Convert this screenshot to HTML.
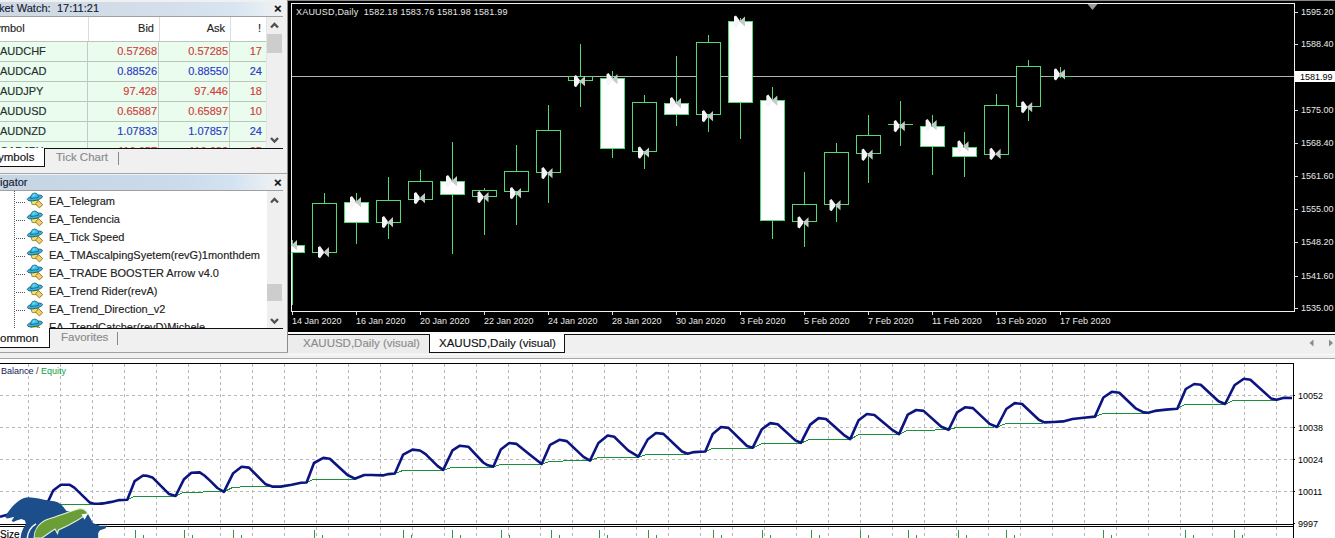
<!DOCTYPE html><html><head><meta charset="utf-8"><style>

*{margin:0;padding:0;box-sizing:border-box}
html,body{width:1335px;height:538px;overflow:hidden;background:#f0f0f0;font-family:"Liberation Sans", sans-serif;}
.a{position:absolute}
.t{position:absolute;white-space:nowrap;line-height:1;-webkit-text-stroke:0.15px currentColor}

</style></head><body>
<div class="a" style="left:0;top:0;width:283px;height:2px;background:#eef0f2"></div>
<div class="a" style="left:0;top:2px;width:283px;height:14px;background:linear-gradient(to right,#cfd8e2,#d4dfeb 60%,#d8e4f0 82%,#e8eef3 94%,#f0f0f0)"></div>
<div class="t" style="left:-1px;top:3px;font-size:11px;color:#142232">ket Watch:</div>
<div class="t" style="left:57px;top:3px;font-size:11px;color:#142232">17:11:21</div>
<div class="a" style="left:0;top:16px;width:283px;height:1px;background:#a0a0a0"></div>
<div class="a" style="left:0;top:17px;width:267px;height:24px;background:#fff"></div>
<div class="a" style="left:0;top:41px;width:267px;height:107px;background:#eafcee"></div>
<div class="a" style="left:0;top:0;width:267px;height:148px;overflow:hidden">
<div class="t" style="left:-12px;top:23px;font-size:11px;color:#222">Symbol</div>
<div class="t" style="left:88px;width:66px;text-align:right;top:23px;font-size:11px;color:#222">Bid</div>
<div class="t" style="left:159px;width:66px;text-align:right;top:23px;font-size:11px;color:#222">Ask</div>
<div class="t" style="left:230px;width:31px;text-align:right;top:23px;font-size:11px;color:#222">!</div>
<div class="a" style="left:0;top:41px;width:266px;height:1px;background:#bcc4bc"></div>
<div class="t" style="left:0;top:46px;font-size:11px;color:#1e2e2e">AUDCHF</div>
<div class="t" style="left:88px;width:69px;text-align:right;top:46px;font-size:11px;color:#d23c3c">0.57268</div>
<div class="t" style="left:159px;width:69px;text-align:right;top:46px;font-size:11px;color:#d23c3c">0.57285</div>
<div class="t" style="left:230px;width:32px;text-align:right;top:46px;font-size:11px;color:#d23c3c">17</div>
<div class="a" style="left:0;top:61px;width:266px;height:1px;background:#bcc4bc"></div>
<div class="t" style="left:0;top:66px;font-size:11px;color:#1e2e2e">AUDCAD</div>
<div class="t" style="left:88px;width:69px;text-align:right;top:66px;font-size:11px;color:#2a3ac8">0.88526</div>
<div class="t" style="left:159px;width:69px;text-align:right;top:66px;font-size:11px;color:#2a3ac8">0.88550</div>
<div class="t" style="left:230px;width:32px;text-align:right;top:66px;font-size:11px;color:#2a3ac8">24</div>
<div class="a" style="left:0;top:81px;width:266px;height:1px;background:#bcc4bc"></div>
<div class="t" style="left:0;top:86px;font-size:11px;color:#1e2e2e">AUDJPY</div>
<div class="t" style="left:88px;width:69px;text-align:right;top:86px;font-size:11px;color:#d23c3c">97.428</div>
<div class="t" style="left:159px;width:69px;text-align:right;top:86px;font-size:11px;color:#d23c3c">97.446</div>
<div class="t" style="left:230px;width:32px;text-align:right;top:86px;font-size:11px;color:#d23c3c">18</div>
<div class="a" style="left:0;top:101px;width:266px;height:1px;background:#bcc4bc"></div>
<div class="t" style="left:0;top:106px;font-size:11px;color:#1e2e2e">AUDUSD</div>
<div class="t" style="left:88px;width:69px;text-align:right;top:106px;font-size:11px;color:#d23c3c">0.65887</div>
<div class="t" style="left:159px;width:69px;text-align:right;top:106px;font-size:11px;color:#d23c3c">0.65897</div>
<div class="t" style="left:230px;width:32px;text-align:right;top:106px;font-size:11px;color:#d23c3c">10</div>
<div class="a" style="left:0;top:121px;width:266px;height:1px;background:#bcc4bc"></div>
<div class="t" style="left:0;top:126px;font-size:11px;color:#1e2e2e">AUDNZD</div>
<div class="t" style="left:88px;width:69px;text-align:right;top:126px;font-size:11px;color:#2a3ac8">1.07833</div>
<div class="t" style="left:159px;width:69px;text-align:right;top:126px;font-size:11px;color:#2a3ac8">1.07857</div>
<div class="t" style="left:230px;width:32px;text-align:right;top:126px;font-size:11px;color:#2a3ac8">24</div>
<div class="a" style="left:0;top:141px;width:266px;height:1px;background:#bcc4bc"></div>
<div class="t" style="left:0;top:146px;font-size:11px;color:#1e2e2e">CADJPY</div>
<div class="t" style="left:88px;width:69px;text-align:right;top:146px;font-size:11px;color:#d23c3c">116.657</div>
<div class="t" style="left:159px;width:69px;text-align:right;top:146px;font-size:11px;color:#d23c3c">116.682</div>
<div class="t" style="left:230px;width:32px;text-align:right;top:146px;font-size:11px;color:#d23c3c">25</div>
</div>
<div class="a" style="left:88px;top:17px;width:1px;height:24px;background:#dcdcdc"></div>
<div class="a" style="left:87px;top:41px;width:1px;height:107px;background:#c4cac4"></div>
<div class="a" style="left:159px;top:17px;width:1px;height:24px;background:#dcdcdc"></div>
<div class="a" style="left:158px;top:41px;width:1px;height:107px;background:#c4cac4"></div>
<div class="a" style="left:230px;top:17px;width:1px;height:24px;background:#dcdcdc"></div>
<div class="a" style="left:229px;top:41px;width:1px;height:107px;background:#c4cac4"></div>
<div class="a" style="left:267px;top:17px;width:15px;height:131px;background:#efefef"></div>
<div class="a" style="left:267px;top:34px;width:15px;height:19px;background:#cdcdcd"></div>
<div class="a" style="left:0;top:148px;width:283px;height:1px;background:#111"></div>
<div class="a" style="left:0;top:148px;width:45px;height:19px;background:#fff;border:1px solid #111;border-top:none;border-left:none"></div>
<div class="t" style="left:-2px;top:152px;font-size:11.5px;color:#111">ymbols</div>
<div class="t" style="left:56px;top:152px;font-size:11.5px;color:#8a8a8a">Tick Chart</div>
<div class="a" style="left:118px;top:152px;width:1px;height:13px;background:#888"></div>
<div class="a" style="left:0;top:173px;width:283px;height:1px;background:#a8a8a8"></div>
<div class="a" style="left:0;top:175px;width:283px;height:15px;background:linear-gradient(to right,#c6d5e4,#cbdaea 60%,#d3e2f1 82%,#e8eef3 94%,#f0f0f0)"></div>
<div class="t" style="left:0px;top:177px;font-size:11px;color:#142232">igator</div>
<div class="a" style="left:0;top:190px;width:283px;height:1px;background:#a0a0a0"></div>
<div class="a" style="left:0;top:191px;width:267px;height:138px;background:#fff"></div>
<div class="a" style="left:0;top:191px;width:267px;height:138px;overflow:hidden">
<div class="t" style="left:49px;top:5px;font-size:11px;color:#222">EA_Telegram</div>
<svg class="a" style="left:24px;top:0px" width="22" height="18" viewBox="0 0 22 18"><path d="M6.8,9.3 L14.6,9.3 L13.2,13.6 L8.2,13.6 Z" fill="#f0e070" stroke="#8a7628" stroke-width="0.8"/><path d="M14.7,9.7 L18.7,13.7 L15.4,16.9 L11.4,12.9 Z" fill="#f0d262" stroke="#946a28" stroke-width="0.9"/><ellipse cx="10.9" cy="7" rx="7.7" ry="2.5" transform="rotate(-12 10.9 7)" fill="#38b4de" stroke="#17607a" stroke-width="0.9"/><path d="M6.6,7.6 Q6.8,2.2 10.6,2.1 Q14.2,2.1 14.6,6.4 Z" fill="#3cc2ee" stroke="#17607a" stroke-width="0.8"/><path d="M8.5,5.5 Q9,3.2 11,3.1 L10,5.6 Z" fill="#8ee0fa"/></svg>
<div class="t" style="left:49px;top:23px;font-size:11px;color:#222">EA_Tendencia</div>
<svg class="a" style="left:24px;top:18px" width="22" height="18" viewBox="0 0 22 18"><path d="M6.8,9.3 L14.6,9.3 L13.2,13.6 L8.2,13.6 Z" fill="#f0e070" stroke="#8a7628" stroke-width="0.8"/><path d="M14.7,9.7 L18.7,13.7 L15.4,16.9 L11.4,12.9 Z" fill="#f0d262" stroke="#946a28" stroke-width="0.9"/><ellipse cx="10.9" cy="7" rx="7.7" ry="2.5" transform="rotate(-12 10.9 7)" fill="#38b4de" stroke="#17607a" stroke-width="0.9"/><path d="M6.6,7.6 Q6.8,2.2 10.6,2.1 Q14.2,2.1 14.6,6.4 Z" fill="#3cc2ee" stroke="#17607a" stroke-width="0.8"/><path d="M8.5,5.5 Q9,3.2 11,3.1 L10,5.6 Z" fill="#8ee0fa"/></svg>
<div class="t" style="left:49px;top:41px;font-size:11px;color:#222">EA_Tick Speed</div>
<svg class="a" style="left:24px;top:36px" width="22" height="18" viewBox="0 0 22 18"><path d="M6.8,9.3 L14.6,9.3 L13.2,13.6 L8.2,13.6 Z" fill="#f0e070" stroke="#8a7628" stroke-width="0.8"/><path d="M14.7,9.7 L18.7,13.7 L15.4,16.9 L11.4,12.9 Z" fill="#f0d262" stroke="#946a28" stroke-width="0.9"/><ellipse cx="10.9" cy="7" rx="7.7" ry="2.5" transform="rotate(-12 10.9 7)" fill="#38b4de" stroke="#17607a" stroke-width="0.9"/><path d="M6.6,7.6 Q6.8,2.2 10.6,2.1 Q14.2,2.1 14.6,6.4 Z" fill="#3cc2ee" stroke="#17607a" stroke-width="0.8"/><path d="M8.5,5.5 Q9,3.2 11,3.1 L10,5.6 Z" fill="#8ee0fa"/></svg>
<div class="t" style="left:49px;top:59px;font-size:11px;color:#222">EA_TMAscalpingSyetem(revG)1monthdem</div>
<svg class="a" style="left:24px;top:54px" width="22" height="18" viewBox="0 0 22 18"><path d="M6.8,9.3 L14.6,9.3 L13.2,13.6 L8.2,13.6 Z" fill="#f0e070" stroke="#8a7628" stroke-width="0.8"/><path d="M14.7,9.7 L18.7,13.7 L15.4,16.9 L11.4,12.9 Z" fill="#f0d262" stroke="#946a28" stroke-width="0.9"/><ellipse cx="10.9" cy="7" rx="7.7" ry="2.5" transform="rotate(-12 10.9 7)" fill="#38b4de" stroke="#17607a" stroke-width="0.9"/><path d="M6.6,7.6 Q6.8,2.2 10.6,2.1 Q14.2,2.1 14.6,6.4 Z" fill="#3cc2ee" stroke="#17607a" stroke-width="0.8"/><path d="M8.5,5.5 Q9,3.2 11,3.1 L10,5.6 Z" fill="#8ee0fa"/></svg>
<div class="t" style="left:49px;top:77px;font-size:11px;color:#222">EA_TRADE BOOSTER Arrow v4.0</div>
<svg class="a" style="left:24px;top:72px" width="22" height="18" viewBox="0 0 22 18"><path d="M6.8,9.3 L14.6,9.3 L13.2,13.6 L8.2,13.6 Z" fill="#f0e070" stroke="#8a7628" stroke-width="0.8"/><path d="M14.7,9.7 L18.7,13.7 L15.4,16.9 L11.4,12.9 Z" fill="#f0d262" stroke="#946a28" stroke-width="0.9"/><ellipse cx="10.9" cy="7" rx="7.7" ry="2.5" transform="rotate(-12 10.9 7)" fill="#38b4de" stroke="#17607a" stroke-width="0.9"/><path d="M6.6,7.6 Q6.8,2.2 10.6,2.1 Q14.2,2.1 14.6,6.4 Z" fill="#3cc2ee" stroke="#17607a" stroke-width="0.8"/><path d="M8.5,5.5 Q9,3.2 11,3.1 L10,5.6 Z" fill="#8ee0fa"/></svg>
<div class="t" style="left:49px;top:95px;font-size:11px;color:#222">EA_Trend Rider(revA)</div>
<svg class="a" style="left:24px;top:90px" width="22" height="18" viewBox="0 0 22 18"><path d="M6.8,9.3 L14.6,9.3 L13.2,13.6 L8.2,13.6 Z" fill="#f0e070" stroke="#8a7628" stroke-width="0.8"/><path d="M14.7,9.7 L18.7,13.7 L15.4,16.9 L11.4,12.9 Z" fill="#f0d262" stroke="#946a28" stroke-width="0.9"/><ellipse cx="10.9" cy="7" rx="7.7" ry="2.5" transform="rotate(-12 10.9 7)" fill="#38b4de" stroke="#17607a" stroke-width="0.9"/><path d="M6.6,7.6 Q6.8,2.2 10.6,2.1 Q14.2,2.1 14.6,6.4 Z" fill="#3cc2ee" stroke="#17607a" stroke-width="0.8"/><path d="M8.5,5.5 Q9,3.2 11,3.1 L10,5.6 Z" fill="#8ee0fa"/></svg>
<div class="t" style="left:49px;top:113px;font-size:11px;color:#222">EA_Trend_Direction_v2</div>
<svg class="a" style="left:24px;top:108px" width="22" height="18" viewBox="0 0 22 18"><path d="M6.8,9.3 L14.6,9.3 L13.2,13.6 L8.2,13.6 Z" fill="#f0e070" stroke="#8a7628" stroke-width="0.8"/><path d="M14.7,9.7 L18.7,13.7 L15.4,16.9 L11.4,12.9 Z" fill="#f0d262" stroke="#946a28" stroke-width="0.9"/><ellipse cx="10.9" cy="7" rx="7.7" ry="2.5" transform="rotate(-12 10.9 7)" fill="#38b4de" stroke="#17607a" stroke-width="0.9"/><path d="M6.6,7.6 Q6.8,2.2 10.6,2.1 Q14.2,2.1 14.6,6.4 Z" fill="#3cc2ee" stroke="#17607a" stroke-width="0.8"/><path d="M8.5,5.5 Q9,3.2 11,3.1 L10,5.6 Z" fill="#8ee0fa"/></svg>
<div class="t" style="left:49px;top:131px;font-size:11px;color:#222">EA_TrendCatcher(revD)Michele</div>
<svg class="a" style="left:24px;top:126px" width="22" height="18" viewBox="0 0 22 18"><path d="M6.8,9.3 L14.6,9.3 L13.2,13.6 L8.2,13.6 Z" fill="#f0e070" stroke="#8a7628" stroke-width="0.8"/><path d="M14.7,9.7 L18.7,13.7 L15.4,16.9 L11.4,12.9 Z" fill="#f0d262" stroke="#946a28" stroke-width="0.9"/><ellipse cx="10.9" cy="7" rx="7.7" ry="2.5" transform="rotate(-12 10.9 7)" fill="#38b4de" stroke="#17607a" stroke-width="0.9"/><path d="M6.6,7.6 Q6.8,2.2 10.6,2.1 Q14.2,2.1 14.6,6.4 Z" fill="#3cc2ee" stroke="#17607a" stroke-width="0.8"/><path d="M8.5,5.5 Q9,3.2 11,3.1 L10,5.6 Z" fill="#8ee0fa"/></svg>
</div>
<div class="a" style="left:14px;top:191px;width:1px;height:138px;background:repeating-linear-gradient(to bottom,#555 0 1px,transparent 1px 2px)"></div>
<div class="a" style="left:15px;top:202px;width:10px;height:1px;background:repeating-linear-gradient(to right,transparent 0 1px,#555 1px 2px)"></div>
<div class="a" style="left:15px;top:220px;width:10px;height:1px;background:repeating-linear-gradient(to right,transparent 0 1px,#555 1px 2px)"></div>
<div class="a" style="left:15px;top:238px;width:10px;height:1px;background:repeating-linear-gradient(to right,transparent 0 1px,#555 1px 2px)"></div>
<div class="a" style="left:15px;top:256px;width:10px;height:1px;background:repeating-linear-gradient(to right,transparent 0 1px,#555 1px 2px)"></div>
<div class="a" style="left:15px;top:274px;width:10px;height:1px;background:repeating-linear-gradient(to right,transparent 0 1px,#555 1px 2px)"></div>
<div class="a" style="left:15px;top:292px;width:10px;height:1px;background:repeating-linear-gradient(to right,transparent 0 1px,#555 1px 2px)"></div>
<div class="a" style="left:15px;top:310px;width:10px;height:1px;background:repeating-linear-gradient(to right,transparent 0 1px,#555 1px 2px)"></div>
<div class="a" style="left:15px;top:328px;width:10px;height:1px;background:repeating-linear-gradient(to right,transparent 0 1px,#555 1px 2px)"></div>
<div class="a" style="left:267px;top:191px;width:15px;height:138px;background:#efefef"></div>
<div class="a" style="left:267px;top:284px;width:15px;height:17px;background:#cdcdcd"></div>
<div class="a" style="left:0;top:328px;width:283px;height:1px;background:#111"></div>
<div class="a" style="left:0;top:328px;width:50px;height:20px;background:#fff;border:1px solid #111;border-top:none;border-left:none"></div>
<div class="t" style="left:0px;top:333px;font-size:11.5px;color:#111">ommon</div>
<div class="t" style="left:61px;top:332px;font-size:11.5px;color:#8a8a8a">Favorites</div>
<div class="a" style="left:117px;top:332px;width:1px;height:13px;background:#888"></div>
<svg class="a" style="left:270px;top:22px" width="9" height="7"><path d="M1,5.5 L4.5,2 L8,5.5" fill="none" stroke="#505050" stroke-width="2.3"/></svg>
<svg class="a" style="left:270px;top:137px" width="9" height="7"><path d="M1,1 L4.5,4.5 L8,1" fill="none" stroke="#505050" stroke-width="2.3"/></svg>
<div class="a" style="left:266px;top:17px;width:1px;height:131px;background:#e2e6e2"></div>
<svg class="a" style="left:270px;top:197px" width="9" height="7"><path d="M1,5.5 L4.5,2 L8,5.5" fill="none" stroke="#505050" stroke-width="2.3"/></svg>
<svg class="a" style="left:270px;top:318px" width="9" height="7"><path d="M1,1 L4.5,4.5 L8,1" fill="none" stroke="#505050" stroke-width="2.3"/></svg>
<div class="t" style="left:274px;top:2px;font-size:13px;font-weight:bold;color:#111">×</div>
<div class="t" style="left:274px;top:176px;font-size:13px;font-weight:bold;color:#111">×</div>
<div class="a" style="left:287px;top:0;width:1px;height:353px;background:#8c8c8c"></div>
<div class="a" style="left:283px;top:173px;width:4px;height:1px;background:#a8a8a8"></div>
<div class="a" style="left:0;top:352px;width:288px;height:1px;background:#a0a0a0"></div>
<div class="a" style="left:288px;top:0px;width:1047px;height:332px;background:#000"></div>
<div class="a" style="left:288px;top:0px;width:1047px;height:1px;background:#8a8a8a"></div>
<div class="a" style="left:291px;top:3px;width:1004px;height:309px;border:1px solid #f0f0f0"></div>
<div class="t" style="left:296px;top:8px;font-size:9px;-webkit-text-stroke:0;letter-spacing:0.2px;color:#e8e8e8">XAUUSD,Daily&nbsp; 1582.18 1583.76 1581.98 1581.99</div>
<svg width="1335" height="538" style="position:absolute;left:0;top:0">
<defs><clipPath id="cc"><rect x="291.5" y="4" width="1002.5" height="307"/></clipPath></defs>
<line x1="292" y1="76.5" x2="1294" y2="76.5" stroke="#b4b4b4" stroke-width="1"/>
<g clip-path="url(#cc)" shape-rendering="crispEdges">
<rect x="292" y="240" width="1" height="65" fill="#52da76"/>
<rect x="280.5" y="245.5" width="24" height="7" fill="#ffffff" stroke="#52da76" stroke-width="1"/>
<rect x="324" y="193" width="1" height="60" fill="#52da76"/>
<rect x="312.5" y="203.5" width="24" height="49" fill="#000000" stroke="#52da76" stroke-width="1"/>
<rect x="356" y="193" width="1" height="51" fill="#52da76"/>
<rect x="344.5" y="202.5" width="24" height="20" fill="#ffffff" stroke="#52da76" stroke-width="1"/>
<rect x="388" y="177" width="1" height="62" fill="#52da76"/>
<rect x="376.5" y="200.5" width="24" height="22" fill="#000000" stroke="#52da76" stroke-width="1"/>
<rect x="420" y="170" width="1" height="30" fill="#52da76"/>
<rect x="408.5" y="181.5" width="24" height="18" fill="#000000" stroke="#52da76" stroke-width="1"/>
<rect x="452" y="142" width="1" height="112" fill="#52da76"/>
<rect x="440.5" y="181.5" width="24" height="13" fill="#ffffff" stroke="#52da76" stroke-width="1"/>
<rect x="484" y="188" width="1" height="47" fill="#52da76"/>
<rect x="472.5" y="190.5" width="24" height="6" fill="#000000" stroke="#52da76" stroke-width="1"/>
<rect x="516" y="145" width="1" height="80" fill="#52da76"/>
<rect x="504.5" y="171.5" width="24" height="20" fill="#000000" stroke="#52da76" stroke-width="1"/>
<rect x="548" y="105" width="1" height="98" fill="#52da76"/>
<rect x="536.5" y="130.5" width="24" height="42" fill="#000000" stroke="#52da76" stroke-width="1"/>
<rect x="580" y="44" width="1" height="63" fill="#52da76"/>
<rect x="568.5" y="76.5" width="24" height="4" fill="#000000" stroke="#52da76" stroke-width="1"/>
<rect x="612" y="71" width="1" height="87" fill="#52da76"/>
<rect x="600.5" y="78.5" width="24" height="70" fill="#ffffff" stroke="#52da76" stroke-width="1"/>
<rect x="644" y="95" width="1" height="74" fill="#52da76"/>
<rect x="632.5" y="102.5" width="24" height="49" fill="#000000" stroke="#52da76" stroke-width="1"/>
<rect x="676" y="56" width="1" height="70" fill="#52da76"/>
<rect x="664.5" y="103.5" width="24" height="11" fill="#ffffff" stroke="#52da76" stroke-width="1"/>
<rect x="708" y="35" width="1" height="97" fill="#52da76"/>
<rect x="696.5" y="42.5" width="24" height="72" fill="#000000" stroke="#52da76" stroke-width="1"/>
<rect x="740" y="18" width="1" height="121" fill="#52da76"/>
<rect x="728.5" y="21.5" width="24" height="81" fill="#ffffff" stroke="#52da76" stroke-width="1"/>
<rect x="772" y="87" width="1" height="152" fill="#52da76"/>
<rect x="760.5" y="100.5" width="24" height="120" fill="#ffffff" stroke="#52da76" stroke-width="1"/>
<rect x="804" y="172" width="1" height="75" fill="#52da76"/>
<rect x="792.5" y="204.5" width="24" height="17" fill="#000000" stroke="#52da76" stroke-width="1"/>
<rect x="836" y="143" width="1" height="79" fill="#52da76"/>
<rect x="824.5" y="152.5" width="24" height="52" fill="#000000" stroke="#52da76" stroke-width="1"/>
<rect x="868" y="115" width="1" height="68" fill="#52da76"/>
<rect x="856.5" y="135.5" width="24" height="18" fill="#000000" stroke="#52da76" stroke-width="1"/>
<rect x="900" y="101" width="1" height="45" fill="#52da76"/>
<rect x="888" y="124" width="25" height="1" fill="#52da76"/>
<rect x="932" y="115" width="1" height="60" fill="#52da76"/>
<rect x="920.5" y="126.5" width="24" height="20" fill="#ffffff" stroke="#52da76" stroke-width="1"/>
<rect x="964" y="132" width="1" height="45" fill="#52da76"/>
<rect x="952.5" y="147.5" width="24" height="9" fill="#ffffff" stroke="#52da76" stroke-width="1"/>
<rect x="996" y="94" width="1" height="61" fill="#52da76"/>
<rect x="984.5" y="105.5" width="24" height="49" fill="#000000" stroke="#52da76" stroke-width="1"/>
<rect x="1028" y="60" width="1" height="61" fill="#52da76"/>
<rect x="1016.5" y="66.5" width="24" height="40" fill="#000000" stroke="#52da76" stroke-width="1"/>
<rect x="1060" y="67" width="1" height="11" fill="#52da76"/>
<rect x="1048" y="76" width="25" height="1" fill="#52da76"/>
</g>
<g clip-path="url(#cc)">
<g transform="translate(292,245)"><path d="M-6,-4.8 L-4,-6 L-0.3,-1 L-0.3,1.3 L-4,6.3 L-6,5 Z" fill="#f6f4f6"/><path d="M0.2,-0.6 L5,-5 L5,5.2 L0.2,1 Z" fill="#c6caca"/></g>
<g transform="translate(324,252)"><path d="M-6,-4.8 L-4,-6 L-0.3,-1 L-0.3,1.3 L-4,6.3 L-6,5 Z" fill="#f6f4f6"/><path d="M0.2,-0.6 L5,-5 L5,5.2 L0.2,1 Z" fill="#c6caca"/></g>
<g transform="translate(356,202)"><path d="M-6,-4.8 L-4,-6 L-0.3,-1 L-0.3,1.3 L-4,6.3 L-6,5 Z" fill="#f6f4f6"/><path d="M0.2,-0.6 L5,-5 L5,5.2 L0.2,1 Z" fill="#c6caca"/></g>
<g transform="translate(388,222)"><path d="M-6,-4.8 L-4,-6 L-0.3,-1 L-0.3,1.3 L-4,6.3 L-6,5 Z" fill="#f6f4f6"/><path d="M0.2,-0.6 L5,-5 L5,5.2 L0.2,1 Z" fill="#c6caca"/></g>
<g transform="translate(420,198)"><path d="M-6,-4.8 L-4,-6 L-0.3,-1 L-0.3,1.3 L-4,6.3 L-6,5 Z" fill="#f6f4f6"/><path d="M0.2,-0.6 L5,-5 L5,5.2 L0.2,1 Z" fill="#c6caca"/></g>
<g transform="translate(452,181)"><path d="M-6,-4.8 L-4,-6 L-0.3,-1 L-0.3,1.3 L-4,6.3 L-6,5 Z" fill="#f6f4f6"/><path d="M0.2,-0.6 L5,-5 L5,5.2 L0.2,1 Z" fill="#c6caca"/></g>
<g transform="translate(483.5,197)"><path d="M-6,-4.8 L-4,-6 L-0.3,-1 L-0.3,1.3 L-4,6.3 L-6,5 Z" fill="#f6f4f6"/><path d="M0.2,-0.6 L5,-5 L5,5.2 L0.2,1 Z" fill="#c6caca"/></g>
<g transform="translate(516,193)"><path d="M-6,-4.8 L-4,-6 L-0.3,-1 L-0.3,1.3 L-4,6.3 L-6,5 Z" fill="#f6f4f6"/><path d="M0.2,-0.6 L5,-5 L5,5.2 L0.2,1 Z" fill="#c6caca"/></g>
<g transform="translate(547.5,173)"><path d="M-6,-4.8 L-4,-6 L-0.3,-1 L-0.3,1.3 L-4,6.3 L-6,5 Z" fill="#f6f4f6"/><path d="M0.2,-0.6 L5,-5 L5,5.2 L0.2,1 Z" fill="#c6caca"/></g>
<g transform="translate(580,81)"><path d="M-6,-4.8 L-4,-6 L-0.3,-1 L-0.3,1.3 L-4,6.3 L-6,5 Z" fill="#f6f4f6"/><path d="M0.2,-0.6 L5,-5 L5,5.2 L0.2,1 Z" fill="#c6caca"/></g>
<g transform="translate(612.5,79)"><path d="M-6,-4.8 L-4,-6 L-0.3,-1 L-0.3,1.3 L-4,6.3 L-6,5 Z" fill="#f6f4f6"/><path d="M0.2,-0.6 L5,-5 L5,5.2 L0.2,1 Z" fill="#c6caca"/></g>
<g transform="translate(644,152.4)"><path d="M-6,-4.8 L-4,-6 L-0.3,-1 L-0.3,1.3 L-4,6.3 L-6,5 Z" fill="#f6f4f6"/><path d="M0.2,-0.6 L5,-5 L5,5.2 L0.2,1 Z" fill="#c6caca"/></g>
<g transform="translate(676,103)"><path d="M-6,-4.8 L-4,-6 L-0.3,-1 L-0.3,1.3 L-4,6.3 L-6,5 Z" fill="#f6f4f6"/><path d="M0.2,-0.6 L5,-5 L5,5.2 L0.2,1 Z" fill="#c6caca"/></g>
<g transform="translate(708,116)"><path d="M-6,-4.8 L-4,-6 L-0.3,-1 L-0.3,1.3 L-4,6.3 L-6,5 Z" fill="#f6f4f6"/><path d="M0.2,-0.6 L5,-5 L5,5.2 L0.2,1 Z" fill="#c6caca"/></g>
<g transform="translate(740,21.4)"><path d="M-6,-4.8 L-4,-6 L-0.3,-1 L-0.3,1.3 L-4,6.3 L-6,5 Z" fill="#f6f4f6"/><path d="M0.2,-0.6 L5,-5 L5,5.2 L0.2,1 Z" fill="#c6caca"/></g>
<g transform="translate(772.3,100.6)"><path d="M-6,-4.8 L-4,-6 L-0.3,-1 L-0.3,1.3 L-4,6.3 L-6,5 Z" fill="#f6f4f6"/><path d="M0.2,-0.6 L5,-5 L5,5.2 L0.2,1 Z" fill="#c6caca"/></g>
<g transform="translate(803.5,222.3)"><path d="M-6,-4.8 L-4,-6 L-0.3,-1 L-0.3,1.3 L-4,6.3 L-6,5 Z" fill="#f6f4f6"/><path d="M0.2,-0.6 L5,-5 L5,5.2 L0.2,1 Z" fill="#c6caca"/></g>
<g transform="translate(835.5,205)"><path d="M-6,-4.8 L-4,-6 L-0.3,-1 L-0.3,1.3 L-4,6.3 L-6,5 Z" fill="#f6f4f6"/><path d="M0.2,-0.6 L5,-5 L5,5.2 L0.2,1 Z" fill="#c6caca"/></g>
<g transform="translate(867.6,154.6)"><path d="M-6,-4.8 L-4,-6 L-0.3,-1 L-0.3,1.3 L-4,6.3 L-6,5 Z" fill="#f6f4f6"/><path d="M0.2,-0.6 L5,-5 L5,5.2 L0.2,1 Z" fill="#c6caca"/></g>
<g transform="translate(899.8,126)"><path d="M-6,-4.8 L-4,-6 L-0.3,-1 L-0.3,1.3 L-4,6.3 L-6,5 Z" fill="#f6f4f6"/><path d="M0.2,-0.6 L5,-5 L5,5.2 L0.2,1 Z" fill="#c6caca"/></g>
<g transform="translate(931.6,125)"><path d="M-6,-4.8 L-4,-6 L-0.3,-1 L-0.3,1.3 L-4,6.3 L-6,5 Z" fill="#f6f4f6"/><path d="M0.2,-0.6 L5,-5 L5,5.2 L0.2,1 Z" fill="#c6caca"/></g>
<g transform="translate(963.5,146.3)"><path d="M-6,-4.8 L-4,-6 L-0.3,-1 L-0.3,1.3 L-4,6.3 L-6,5 Z" fill="#f6f4f6"/><path d="M0.2,-0.6 L5,-5 L5,5.2 L0.2,1 Z" fill="#c6caca"/></g>
<g transform="translate(995.6,153.8)"><path d="M-6,-4.8 L-4,-6 L-0.3,-1 L-0.3,1.3 L-4,6.3 L-6,5 Z" fill="#f6f4f6"/><path d="M0.2,-0.6 L5,-5 L5,5.2 L0.2,1 Z" fill="#c6caca"/></g>
<g transform="translate(1027.2,107)"><path d="M-6,-4.8 L-4,-6 L-0.3,-1 L-0.3,1.3 L-4,6.3 L-6,5 Z" fill="#f6f4f6"/><path d="M0.2,-0.6 L5,-5 L5,5.2 L0.2,1 Z" fill="#c6caca"/></g>
<g transform="translate(1060,74.2)"><path d="M-6,-4.8 L-4,-6 L-0.3,-1 L-0.3,1.3 L-4,6.3 L-6,5 Z" fill="#f6f4f6"/><path d="M0.2,-0.6 L5,-5 L5,5.2 L0.2,1 Z" fill="#c6caca"/></g>
</g>
</svg>
<div class="a" style="left:1294px;top:12px;width:4px;height:1px;background:#ddd"></div>
<div class="t" style="left:1301px;top:8px;font-size:9px;-webkit-text-stroke:0;color:#e8e8e8">1595.20</div>
<div class="a" style="left:1294px;top:44px;width:4px;height:1px;background:#ddd"></div>
<div class="t" style="left:1301px;top:40px;font-size:9px;-webkit-text-stroke:0;color:#e8e8e8">1588.40</div>
<div class="a" style="left:1294px;top:110px;width:4px;height:1px;background:#ddd"></div>
<div class="t" style="left:1301px;top:106px;font-size:9px;-webkit-text-stroke:0;color:#e8e8e8">1575.00</div>
<div class="a" style="left:1294px;top:143px;width:4px;height:1px;background:#ddd"></div>
<div class="t" style="left:1301px;top:139px;font-size:9px;-webkit-text-stroke:0;color:#e8e8e8">1568.40</div>
<div class="a" style="left:1294px;top:176px;width:4px;height:1px;background:#ddd"></div>
<div class="t" style="left:1301px;top:172px;font-size:9px;-webkit-text-stroke:0;color:#e8e8e8">1561.60</div>
<div class="a" style="left:1294px;top:209px;width:4px;height:1px;background:#ddd"></div>
<div class="t" style="left:1301px;top:205px;font-size:9px;-webkit-text-stroke:0;color:#e8e8e8">1555.00</div>
<div class="a" style="left:1294px;top:242px;width:4px;height:1px;background:#ddd"></div>
<div class="t" style="left:1301px;top:238px;font-size:9px;-webkit-text-stroke:0;color:#e8e8e8">1548.20</div>
<div class="a" style="left:1294px;top:276px;width:4px;height:1px;background:#ddd"></div>
<div class="t" style="left:1301px;top:272px;font-size:9px;-webkit-text-stroke:0;color:#e8e8e8">1541.60</div>
<div class="a" style="left:1294px;top:308px;width:4px;height:1px;background:#ddd"></div>
<div class="t" style="left:1301px;top:304px;font-size:9px;-webkit-text-stroke:0;color:#e8e8e8">1535.00</div>
<div class="a" style="left:1295px;top:71px;width:40px;height:11px;background:#fff"></div>
<div class="t" style="left:1300px;top:73px;font-size:9px;-webkit-text-stroke:0;color:#000">1581.99</div>
<div class="a" style="left:292px;top:312px;width:1px;height:3px;background:#ddd"></div>
<div class="t" style="left:292px;top:317px;font-size:9px;-webkit-text-stroke:0;color:#e8e8e8">14 Jan 2020</div>
<div class="a" style="left:356px;top:312px;width:1px;height:3px;background:#ddd"></div>
<div class="t" style="left:356px;top:317px;font-size:9px;-webkit-text-stroke:0;color:#e8e8e8">16 Jan 2020</div>
<div class="a" style="left:420px;top:312px;width:1px;height:3px;background:#ddd"></div>
<div class="t" style="left:420px;top:317px;font-size:9px;-webkit-text-stroke:0;color:#e8e8e8">20 Jan 2020</div>
<div class="a" style="left:484px;top:312px;width:1px;height:3px;background:#ddd"></div>
<div class="t" style="left:484px;top:317px;font-size:9px;-webkit-text-stroke:0;color:#e8e8e8">22 Jan 2020</div>
<div class="a" style="left:548px;top:312px;width:1px;height:3px;background:#ddd"></div>
<div class="t" style="left:548px;top:317px;font-size:9px;-webkit-text-stroke:0;color:#e8e8e8">24 Jan 2020</div>
<div class="a" style="left:612px;top:312px;width:1px;height:3px;background:#ddd"></div>
<div class="t" style="left:612px;top:317px;font-size:9px;-webkit-text-stroke:0;color:#e8e8e8">28 Jan 2020</div>
<div class="a" style="left:676px;top:312px;width:1px;height:3px;background:#ddd"></div>
<div class="t" style="left:676px;top:317px;font-size:9px;-webkit-text-stroke:0;color:#e8e8e8">30 Jan 2020</div>
<div class="a" style="left:740px;top:312px;width:1px;height:3px;background:#ddd"></div>
<div class="t" style="left:740px;top:317px;font-size:9px;-webkit-text-stroke:0;color:#e8e8e8">3 Feb 2020</div>
<div class="a" style="left:804px;top:312px;width:1px;height:3px;background:#ddd"></div>
<div class="t" style="left:804px;top:317px;font-size:9px;-webkit-text-stroke:0;color:#e8e8e8">5 Feb 2020</div>
<div class="a" style="left:868px;top:312px;width:1px;height:3px;background:#ddd"></div>
<div class="t" style="left:868px;top:317px;font-size:9px;-webkit-text-stroke:0;color:#e8e8e8">7 Feb 2020</div>
<div class="a" style="left:932px;top:312px;width:1px;height:3px;background:#ddd"></div>
<div class="t" style="left:932px;top:317px;font-size:9px;-webkit-text-stroke:0;color:#e8e8e8">11 Feb 2020</div>
<div class="a" style="left:996px;top:312px;width:1px;height:3px;background:#ddd"></div>
<div class="t" style="left:996px;top:317px;font-size:9px;-webkit-text-stroke:0;color:#e8e8e8">13 Feb 2020</div>
<div class="a" style="left:1060px;top:312px;width:1px;height:3px;background:#ddd"></div>
<div class="t" style="left:1060px;top:317px;font-size:9px;-webkit-text-stroke:0;color:#e8e8e8">17 Feb 2020</div>
<svg class="a" style="left:1087px;top:4px" width="12" height="7"><path d="M0.5,0 L10.5,0 L5.5,6 Z" fill="#9a9a9a"/></svg>
<div class="a" style="left:288px;top:332px;width:1047px;height:2px;background:#fafafa"></div>
<div class="a" style="left:288px;top:334px;width:1047px;height:1px;background:#111"></div>
<div class="a" style="left:288px;top:335px;width:141px;height:18px;background:#ececec"></div>
<div class="t" style="left:303px;top:338px;font-size:11.5px;color:#8c8c8c">XAUUSD,Daily (visual)</div>
<div class="a" style="left:429px;top:334px;width:136px;height:19px;background:#fff;border:1px solid #111;border-top:none"></div>
<div class="t" style="left:439px;top:338px;font-size:11.5px;color:#111">XAUUSD,Daily (visual)</div>
<svg class="a" style="left:1309px;top:339px" width="26" height="9"><path d="M4.5,0.5 L0.5,4 L4.5,7.5Z" fill="#8a8a8a"/><path d="M20,0.5 L24,4 L20,7.5Z" fill="#8a8a8a"/></svg>
<div class="a" style="left:288px;top:354px;width:1047px;height:1px;background:#fafafa"></div>
<div class="a" style="left:0;top:358px;width:1335px;height:1px;background:#a8a8a8"></div>
<div class="a" style="left:0;top:359px;width:1335px;height:179px;background:#fff"></div>
<svg width="1335" height="538" style="position:absolute;left:0;top:0">
<g stroke="#b8b8b8" stroke-width="1" stroke-dasharray="3 3" shape-rendering="crispEdges">
<line x1="0" y1="395.5" x2="1293" y2="395.5"/>
<line x1="0" y1="427.5" x2="1293" y2="427.5"/>
<line x1="0" y1="459.5" x2="1293" y2="459.5"/>
<line x1="0" y1="491.5" x2="1293" y2="491.5"/>
<line x1="28.5" y1="364" x2="28.5" y2="524"/>
<line x1="28.5" y1="527" x2="28.5" y2="538"/>
<line x1="60.5" y1="364" x2="60.5" y2="524"/>
<line x1="60.5" y1="527" x2="60.5" y2="538"/>
<line x1="92.5" y1="364" x2="92.5" y2="524"/>
<line x1="92.5" y1="527" x2="92.5" y2="538"/>
<line x1="124.5" y1="364" x2="124.5" y2="524"/>
<line x1="124.5" y1="527" x2="124.5" y2="538"/>
<line x1="156.5" y1="364" x2="156.5" y2="524"/>
<line x1="156.5" y1="527" x2="156.5" y2="538"/>
<line x1="188.5" y1="364" x2="188.5" y2="524"/>
<line x1="188.5" y1="527" x2="188.5" y2="538"/>
<line x1="220.5" y1="364" x2="220.5" y2="524"/>
<line x1="220.5" y1="527" x2="220.5" y2="538"/>
<line x1="252.5" y1="364" x2="252.5" y2="524"/>
<line x1="252.5" y1="527" x2="252.5" y2="538"/>
<line x1="284.5" y1="364" x2="284.5" y2="524"/>
<line x1="284.5" y1="527" x2="284.5" y2="538"/>
<line x1="316.5" y1="364" x2="316.5" y2="524"/>
<line x1="316.5" y1="527" x2="316.5" y2="538"/>
<line x1="348.5" y1="364" x2="348.5" y2="524"/>
<line x1="348.5" y1="527" x2="348.5" y2="538"/>
<line x1="380.5" y1="364" x2="380.5" y2="524"/>
<line x1="380.5" y1="527" x2="380.5" y2="538"/>
<line x1="412.5" y1="364" x2="412.5" y2="524"/>
<line x1="412.5" y1="527" x2="412.5" y2="538"/>
<line x1="444.5" y1="364" x2="444.5" y2="524"/>
<line x1="444.5" y1="527" x2="444.5" y2="538"/>
<line x1="476.5" y1="364" x2="476.5" y2="524"/>
<line x1="476.5" y1="527" x2="476.5" y2="538"/>
<line x1="508.5" y1="364" x2="508.5" y2="524"/>
<line x1="508.5" y1="527" x2="508.5" y2="538"/>
<line x1="540.5" y1="364" x2="540.5" y2="524"/>
<line x1="540.5" y1="527" x2="540.5" y2="538"/>
<line x1="572.5" y1="364" x2="572.5" y2="524"/>
<line x1="572.5" y1="527" x2="572.5" y2="538"/>
<line x1="604.5" y1="364" x2="604.5" y2="524"/>
<line x1="604.5" y1="527" x2="604.5" y2="538"/>
<line x1="636.5" y1="364" x2="636.5" y2="524"/>
<line x1="636.5" y1="527" x2="636.5" y2="538"/>
<line x1="668.5" y1="364" x2="668.5" y2="524"/>
<line x1="668.5" y1="527" x2="668.5" y2="538"/>
<line x1="700.5" y1="364" x2="700.5" y2="524"/>
<line x1="700.5" y1="527" x2="700.5" y2="538"/>
<line x1="732.5" y1="364" x2="732.5" y2="524"/>
<line x1="732.5" y1="527" x2="732.5" y2="538"/>
<line x1="764.5" y1="364" x2="764.5" y2="524"/>
<line x1="764.5" y1="527" x2="764.5" y2="538"/>
<line x1="796.5" y1="364" x2="796.5" y2="524"/>
<line x1="796.5" y1="527" x2="796.5" y2="538"/>
<line x1="828.5" y1="364" x2="828.5" y2="524"/>
<line x1="828.5" y1="527" x2="828.5" y2="538"/>
<line x1="860.5" y1="364" x2="860.5" y2="524"/>
<line x1="860.5" y1="527" x2="860.5" y2="538"/>
<line x1="892.5" y1="364" x2="892.5" y2="524"/>
<line x1="892.5" y1="527" x2="892.5" y2="538"/>
<line x1="924.5" y1="364" x2="924.5" y2="524"/>
<line x1="924.5" y1="527" x2="924.5" y2="538"/>
<line x1="956.5" y1="364" x2="956.5" y2="524"/>
<line x1="956.5" y1="527" x2="956.5" y2="538"/>
<line x1="988.5" y1="364" x2="988.5" y2="524"/>
<line x1="988.5" y1="527" x2="988.5" y2="538"/>
<line x1="1020.5" y1="364" x2="1020.5" y2="524"/>
<line x1="1020.5" y1="527" x2="1020.5" y2="538"/>
<line x1="1052.5" y1="364" x2="1052.5" y2="524"/>
<line x1="1052.5" y1="527" x2="1052.5" y2="538"/>
<line x1="1084.5" y1="364" x2="1084.5" y2="524"/>
<line x1="1084.5" y1="527" x2="1084.5" y2="538"/>
<line x1="1116.5" y1="364" x2="1116.5" y2="524"/>
<line x1="1116.5" y1="527" x2="1116.5" y2="538"/>
<line x1="1148.5" y1="364" x2="1148.5" y2="524"/>
<line x1="1148.5" y1="527" x2="1148.5" y2="538"/>
<line x1="1180.5" y1="364" x2="1180.5" y2="524"/>
<line x1="1180.5" y1="527" x2="1180.5" y2="538"/>
<line x1="1212.5" y1="364" x2="1212.5" y2="524"/>
<line x1="1212.5" y1="527" x2="1212.5" y2="538"/>
<line x1="1244.5" y1="364" x2="1244.5" y2="524"/>
<line x1="1244.5" y1="527" x2="1244.5" y2="538"/>
<line x1="1276.5" y1="364" x2="1276.5" y2="524"/>
<line x1="1276.5" y1="527" x2="1276.5" y2="538"/>
</g>
<g shape-rendering="crispEdges" fill="#000">
<rect x="0" y="363" width="1294" height="1"/>
<rect x="1293" y="363" width="1" height="175"/>
<rect x="0" y="524" width="1294" height="1"/>
<rect x="0" y="526" width="1294" height="1"/>
</g>
<rect x="1294" y="395" width="1" height="1" fill="#000"/>
<rect x="1294" y="427" width="1" height="1" fill="#000"/>
<rect x="1294" y="459" width="1" height="1" fill="#000"/>
<rect x="1294" y="491" width="1" height="1" fill="#000"/>
<rect x="1294" y="523" width="1" height="1" fill="#000"/>
<g fill="#2e9a48" shape-rendering="crispEdges">
<rect x="135" y="530" width="1" height="8"/>
<rect x="143" y="535" width="1" height="3"/>
<rect x="184" y="530" width="1" height="8"/>
<rect x="192" y="535" width="1" height="3"/>
<rect x="233" y="530" width="1" height="8"/>
<rect x="241" y="535" width="1" height="3"/>
<rect x="314" y="530" width="1" height="8"/>
<rect x="322" y="535" width="1" height="3"/>
<rect x="403" y="530" width="1" height="8"/>
<rect x="411" y="535" width="1" height="3"/>
<rect x="452" y="530" width="1" height="8"/>
<rect x="460" y="535" width="1" height="3"/>
<rect x="501" y="530" width="1" height="8"/>
<rect x="509" y="535" width="1" height="3"/>
<rect x="551" y="530" width="1" height="8"/>
<rect x="559" y="535" width="1" height="3"/>
<rect x="599" y="530" width="1" height="8"/>
<rect x="607" y="535" width="1" height="3"/>
<rect x="648" y="530" width="1" height="8"/>
<rect x="656" y="535" width="1" height="3"/>
<rect x="713" y="530" width="1" height="8"/>
<rect x="721" y="535" width="1" height="3"/>
<rect x="762" y="530" width="1" height="8"/>
<rect x="770" y="535" width="1" height="3"/>
<rect x="811" y="530" width="1" height="8"/>
<rect x="819" y="535" width="1" height="3"/>
<rect x="860" y="530" width="1" height="8"/>
<rect x="868" y="535" width="1" height="3"/>
<rect x="908" y="530" width="1" height="8"/>
<rect x="916" y="535" width="1" height="3"/>
<rect x="958" y="530" width="1" height="8"/>
<rect x="966" y="535" width="1" height="3"/>
<rect x="1006" y="530" width="1" height="8"/>
<rect x="1014" y="535" width="1" height="3"/>
<rect x="1103" y="530" width="1" height="8"/>
<rect x="1111" y="535" width="1" height="3"/>
<rect x="1185" y="530" width="1" height="8"/>
<rect x="1193" y="535" width="1" height="3"/>
<rect x="1234" y="530" width="1" height="8"/>
<rect x="1242" y="535" width="1" height="3"/>
</g>
<polyline points="0,516.8 8.2,514.5 41,510 62,504.3 89.8,504.3 127.3,499.7 134.7,496 175.6,496 184,492.2 223.9,491.8 233.2,487.1 272.2,486.6 280.6,486.6 291.8,484.7 301,482.8 306.6,482.5 314,479.3 354.9,479.1 364.2,475 371.6,475 382.8,475.4 388.4,474.1 394.9,473.5 403.2,470.4 443.2,470.3 450.7,467.7 493.4,467.1 499.9,464.7 541.7,464 550.1,461.2 590,460.6 598.4,457.3 638.4,457.1 647.7,454.3 687.6,454 694.1,452.1 705.3,451.5 712.7,448.4 752.6,448.2 761.9,443.5 800.9,443.2 809.3,439.5 850.2,439.3 858.6,434.7 899.1,434.1 907.8,430.4 948.7,429.8 957.1,427.2 997,427 1006.3,423.5 1044.4,423 1053.7,422 1063.1,421.4 1072.5,419 1083.7,417.7 1094.9,416.6 1103.4,413.4 1143.6,413.4 1148.3,412.8 1154.9,410.9 1166.1,409.6 1177.3,408.7 1184.8,404.4 1225.1,404.4 1233.5,400.3 1274.7,400.3 1284.1,397.8 1292,398" fill="none" stroke="#1a9038" stroke-width="1" shape-rendering="crispEdges"/>
<polyline points="0,516.8 8.2,514.5 20,512.5 41,510 48.5,500.6 53.2,490.5 60.8,484.8 69.8,484.8 74.3,487.6 89.8,502.6 94,503.8 101.8,503.8 111.5,501.9 119.3,500.1 127.3,499.7 134.7,481.1 143,475.5 147.7,475.9 152.4,477.4 169.1,494.1 175.6,496 184,479.2 191.4,472.7 199.7,472.4 204.4,475.5 210,480.6 217.4,488 223.9,491.8 233.2,473.2 241.6,466.7 249,467.6 265.7,484.3 272.2,486.6 280.6,486.6 291.8,484.7 301,482.8 306.6,482.5 314,463 323.3,457.9 329.8,458.7 347.5,475 354.9,478.7 364.2,475 371.6,475 382.8,475.4 388.4,474.1 394.9,473.5 403.2,454.6 412.5,449.6 420,450.5 425.6,454.1 437.7,466.2 443.2,469.9 452.5,450.4 459.9,445.7 468.3,446.7 483.2,462.5 487.8,465.3 493.4,466.6 500.8,449.5 509.2,443 516.6,443.9 531.5,456 541.7,464 550.1,444.8 559.4,439.8 566.8,441.1 583.5,456.9 590,460.6 598.4,443 607.7,435.5 614.2,436.8 628.1,450.4 638.4,456.6 647.7,439.5 656,433 663.4,433.9 682,451.5 687.6,453.8 694.1,452.1 705.3,451.5 712.7,433.9 721,427 728.5,427.9 747,446 752.6,447.8 761.9,429.2 770.3,423.1 777.7,424.2 795.4,440.4 800.9,442.8 810.2,424.6 818.6,418.1 826,419 843.7,434.8 850.2,439.1 858.6,420.2 866.9,414 874.4,415 893,430.4 899.1,434.1 907.8,414.6 916.2,410 923.6,410.9 941.3,426.7 948.7,429.8 957.1,412.4 965.4,407.2 972.9,408.1 989.6,423.9 997,427 1006.3,409 1014.7,403.1 1022.1,404 1038.8,419.8 1044.4,422.4 1053.7,422 1063.1,421.4 1072.5,419 1083.7,417.7 1094.9,416.6 1103.4,397.5 1111.8,391.8 1119.3,392.8 1136.1,408.7 1143.6,412.4 1148.3,412.8 1154.9,410.9 1166.1,409.6 1177.3,408.7 1185.8,389 1194.2,384 1200.7,384.7 1218.5,401.2 1225.1,404 1234.5,385.3 1243.8,378.7 1250.4,379.7 1271,398.4 1276.6,399.7 1284.1,397.8 1292,398" fill="none" stroke="#0c1480" stroke-width="2.6" stroke-linejoin="round"/>
<g>
<path d="M4.9,516.8 C8,512 12,506 17.9,501.6 C22,498.5 25,497.3 28.6,497.3 C35,497.5 42,499.5 50,500.7 C56,501.3 60,502.3 63.4,507 L66.5,511 L87.9,513.7 L92.9,523 L100,525.7 L107.1,525.7 L105.4,528.4 L100,530.2 L98.2,533 L98.2,538 L20.5,538 L21.4,532.9 L23.2,528.4 L25.9,523.9 L25,520.4 L21.4,519 L16.5,520.4 L13.4,522.1 L11.6,520.8 L14.3,516.8 L10.7,517.7 L7.1,518.6 Z" fill="#1c4e8c"/>
<path d="M27.3,538 C27.8,532 30.5,527 36,523.8" fill="none" stroke="#f4f8f4" stroke-width="1.5"/>
<path d="M34,538 C34,531 38,523.5 47,519.5 C58,516 70,511.5 78,509 C82,508 85,509 86.5,511.5 L87.9,513.7 L77,520.5 L68,525.5 L58.5,530 L57.5,533.5 L55,529 L49,533 L42,538 Z" fill="#6c9e38" stroke="#e6f2dc" stroke-width="1.1"/>
<path d="M81.5,514.2 L88,513.5 L84.5,519.8 Z" fill="#ffffff"/>
</g>
</svg>
<div class="t" style="left:1298px;top:392px;font-size:9px;-webkit-text-stroke:0;color:#000">10052</div>
<div class="t" style="left:1298px;top:424px;font-size:9px;-webkit-text-stroke:0;color:#000">10038</div>
<div class="t" style="left:1298px;top:456px;font-size:9px;-webkit-text-stroke:0;color:#000">10024</div>
<div class="t" style="left:1298px;top:488px;font-size:9px;-webkit-text-stroke:0;color:#000">10011</div>
<div class="t" style="left:1298px;top:520px;font-size:9px;-webkit-text-stroke:0;color:#000">9997</div>
<div class="t" style="left:1px;top:367px;font-size:9px;-webkit-text-stroke:0;color:#16165a">Balance <span style="color:#333">/</span> <span style="color:#12a040">Equity</span></div>
<div class="t" style="left:0px;top:530px;font-size:10px;color:#000">Size</div>
</body></html>
